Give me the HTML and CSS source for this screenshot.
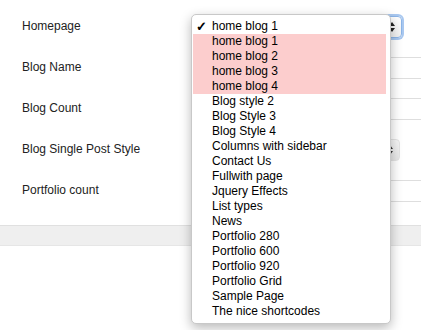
FILE: index.html
```html
<!DOCTYPE html>
<html lang="en">
<head>
    <meta charset="UTF-8">
    <meta name="viewport" content="width=device-width, initial-scale=1.0">
    <title>Theme Options</title>
    <link rel="stylesheet" href="styles.css">
</head>
<body>
    <div class="options-page">
        <div class="form-table">
            <div class="label">Homepage</div>
            <div class="field">
                <div class="fake-select focused">
                    <svg class="select-arrows" width="6" height="10" viewBox="0 0 6 10"><path d="M3 0 L6 4 L0 4 Z M0 6 L6 6 L3 10 Z" fill="#222"/></svg>
                </div>
            </div>

            <div class="label">Blog Name</div>
            <div class="field"><input class="text-input" type="text"></div>

            <div class="label">Blog Count</div>
            <div class="field"><input class="text-input" type="text"></div>

            <div class="label">Blog Single Post Style</div>
            <div class="field">
                <div class="fake-select plain">
                    <svg class="select-arrows" width="6" height="10" viewBox="0 0 6 10"><path d="M3 0 L6 4 L0 4 Z M0 6 L6 6 L3 10 Z" fill="#333"/></svg>
                </div>
            </div>

            <div class="label">Portfolio count</div>
            <div class="field"><input class="text-input" type="text"></div>
        </div>
        <div class="footer-bar"></div>

        <ul class="dropdown">
            <li class="checked"><span class="check">&#10003;</span>home blog 1</li>
            <li class="hl">home blog 1</li>
            <li class="hl">home blog 2</li>
            <li class="hl">home blog 3</li>
            <li class="hl">home blog 4</li>
            <li>Blog style 2</li>
            <li>Blog Style 3</li>
            <li>Blog Style 4</li>
            <li>Columns with sidebar</li>
            <li>Contact Us</li>
            <li>Fullwith page</li>
            <li>Jquery Effects</li>
            <li>List types</li>
            <li>News</li>
            <li>Portfolio 280</li>
            <li>Portfolio 600</li>
            <li>Portfolio 920</li>
            <li>Portfolio Grid</li>
            <li>Sample Page</li>
            <li>The nice shortcodes</li>
        </ul>
    </div>
</body>
</html>
```

FILE: styles.css
```css
body {
    margin: 0;
    background-color: #ffffff;
    font-family: "Liberation Sans", Arial, Helvetica, sans-serif;
    font-size: 12px;
    color: #222;
    overflow: hidden;
}
.options-page {
    position: relative;
    width: 421px;
    height: 330px;
    padding-top: 5px;
    box-sizing: border-box;
}
.form-table {
    display: grid;
    grid-template-columns: 196px 240px;
    grid-auto-rows: 41px;
}
.label {
    padding-left: 22px;
    align-self: center;
}
.field {
    align-self: center;
    padding-top: 3px;
}
.text-input {
    display: block;
    width: 240px;
    height: 22px;
    box-sizing: border-box;
    border: 1px solid #dedede;
    border-radius: 0;
    outline: none;
}
.fake-select {
    display: flex;
    align-items: center;
    justify-content: flex-end;
    width: 206px;
    height: 22px;
    box-sizing: border-box;
    padding: 0 6px 0 8px;
    border-radius: 4px;
}
.fake-select.focused {
    border: 1px solid #8cb5e8;
    box-shadow: 0 0 0 2px #a9c8f0;
    background: linear-gradient(#ffffff, #f0f0f0);
}
.fake-select.plain {
    width: 204px;
    border: 1px solid #e4e4e4;
    background: linear-gradient(#f6f6f6, #e6e6e6);
}
.select-arrows {
    flex-shrink: 0;
}
.footer-bar {
    margin-top: 15px;
    height: 19px;
    background-color: #efefef;
    border-top: 1px solid #e0e0e0;
    border-bottom: 1px solid #e6e6e6;
}
.dropdown {
    position: absolute;
    left: 191px;
    top: 14px;
    width: 200px;
    box-sizing: border-box;
    margin: 0;
    padding: 4px 4px 4px 1px;
    list-style: none;
    background-color: #ffffff;
    border: 1px solid #c8c8c8;
    border-radius: 5px;
    box-shadow: 0 4px 12px rgba(0, 0, 0, 0.28);
    color: #000;
    font-size: 12px;
}
.dropdown li {
    position: relative;
    height: 15px;
    line-height: 15px;
    padding-left: 19px;
    white-space: nowrap;
}
.dropdown li.hl {
    background-color: #fccdcd;
}
.dropdown .check {
    position: absolute;
    left: 3px;
    top: 0;
    font-size: 13px;
    font-weight: bold;
}
```
